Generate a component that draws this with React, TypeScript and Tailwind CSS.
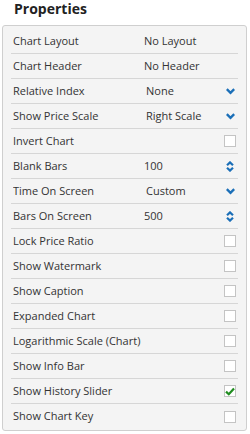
const rows: { label: string; value?: string; kind: 'text' | 'select' | 'spin' | 'check'; checked?: boolean }[] = [
  { label: 'Chart Layout', value: 'No Layout', kind: 'text' },
  { label: 'Chart Header', value: 'No Header', kind: 'text' },
  { label: 'Relative Index', value: 'None', kind: 'select' },
  { label: 'Show Price Scale', value: 'Right Scale', kind: 'select' },
  { label: 'Invert Chart', kind: 'check' },
  { label: 'Blank Bars', value: '100', kind: 'spin' },
  { label: 'Time On Screen', value: 'Custom', kind: 'select' },
  { label: 'Bars On Screen', value: '500', kind: 'spin' },
  { label: 'Lock Price Ratio', kind: 'check' },
  { label: 'Show Watermark', kind: 'check' },
  { label: 'Show Caption', kind: 'check' },
  { label: 'Expanded Chart', kind: 'check' },
  { label: 'Logarithmic Scale (Chart)', kind: 'check' },
  { label: 'Show Info Bar', kind: 'check' },
  { label: 'Show History Slider', kind: 'check', checked: true },
  { label: 'Show Chart Key', kind: 'check' },
];

const Chevron = () => (
  <svg width="9" height="7" viewBox="0 0 9 7" className="mr-[3px]">
    <path d="M0.8 1.2 L4.5 4.9 L8.2 1.2" fill="none" stroke="#1b6fb8" strokeWidth="2.4" />
  </svg>
);

const Spin = () => (
  <svg width="8" height="11" viewBox="0 0 8 11" className="mr-[4px]">
    <path d="M1 4.2 L4 1.4 L7 4.2" fill="none" stroke="#1b6fb8" strokeWidth="2.2" />
    <path d="M1 6.8 L4 9.6 L7 6.8" fill="none" stroke="#1b6fb8" strokeWidth="2.2" />
  </svg>
);

const Check = ({ checked }: { checked?: boolean }) => (
  <div className="w-[12px] h-[12px] border border-[#c4c4c4] bg-white flex items-center justify-center mr-[2px]">
    {checked && (
      <svg width="10" height="9" viewBox="0 0 10 9">
        <path d="M1 4.6 L3.8 7.2 L9 1.4" fill="none" stroke="#1f8c1f" strokeWidth="2.2" />
      </svg>
    )}
  </div>
);

export default function App() {
  return (
    <div className="w-[250px] h-[434px] bg-white font-['Open_Sans',sans-serif] text-[#333]">
      <div className="h-[25px] pl-[14px] text-[14px] font-bold leading-[17px] text-[#222]">Properties</div>
      <div className="mx-[2px] w-[245px] border border-[#cfcfcf] rounded-[3px] bg-[#f4f4f4] px-[8px] pt-[3px] pb-[1px]">
        {rows.map((r, i) => (
          <div
            key={i}
            className={`h-[25px] flex items-center pl-[2px] text-[11px] ${i < rows.length - 1 ? 'border-b border-[#d6d6d6]' : ''}`}
          >
            <div className="w-[131px] truncate">{r.label}</div>
            <div className={`flex-1 ${r.kind === 'select' ? 'pl-[2px]' : ''}`}>{r.value}</div>
            {r.kind === 'select' && <Chevron />}
            {r.kind === 'spin' && <Spin />}
            {r.kind === 'check' && <Check checked={r.checked} />}
          </div>
        ))}
      </div>
    </div>
  );
}
